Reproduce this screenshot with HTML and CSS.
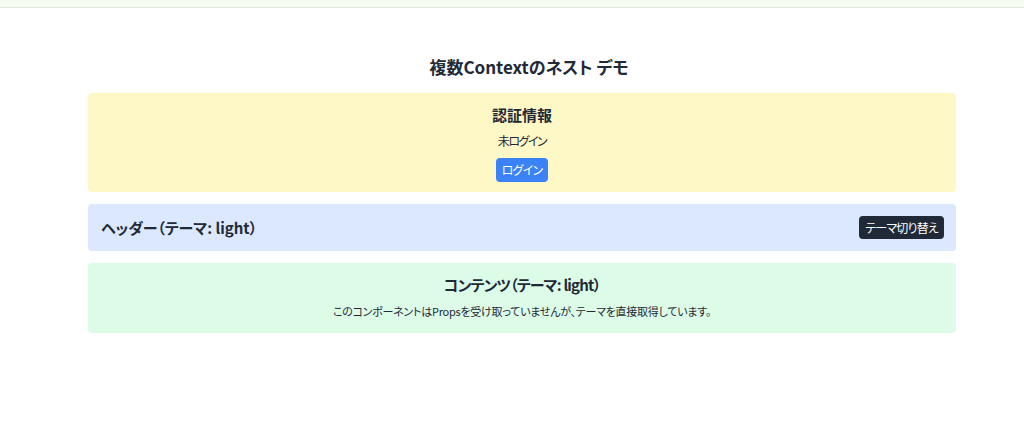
FILE: index.html
```html
<!DOCTYPE html>
<html lang="ja">
<head>
<meta charset="utf-8">
<link rel="stylesheet" href="styles.css">
</head>
<body>
<div class="topbar"></div>
<main class="container">
  <h1 class="title">複数Contextのネスト デモ</h1>
  <section class="box auth">
    <h2 class="box-title">認証情報</h2>
    <p class="status">未ログイン</p>
    <button class="btn btn-blue">ログイン</button>
  </section>
  <section class="box header">
    <h2 class="header-title">ヘッダー（テーマ: light）</h2>
    <button class="btn btn-dark">テーマ切り替え</button>
  </section>
  <section class="box content">
    <h2 class="box-title content-title">コンテンツ（テーマ: light）</h2>
    <p class="desc">このコンポーネントはPropsを受け取っていませんが、テーマを直接取得しています。</p>
  </section>
</main>
</body>
</html>
```
FILE: styles.css
```css
* { box-sizing: border-box; }
html, body { margin: 0; padding: 0; background: #ffffff; }
body {
  font-family: "Noto Sans CJK JP", "Noto Sans", sans-serif;
  font-feature-settings: "palt";
  color: #1f2937;
}
.topbar {
  height: 8px;
  background: #f6fbf0;
  border-bottom: 1px solid #e3e8dc;
}
.container {
  width: 868px;
  margin: 0 0 0 88px;
  padding-top: 47px;
}
.title {
  margin: 0 0 14px;
  padding-left: 14px;
  font-size: 17px;
  line-height: 24px;
  font-weight: 700;
  text-align: center;
  color: #1f2937;
}
.box {
  border-radius: 4px;
  margin-bottom: 12px;
}
.auth {
  background: #fef8c6;
  padding: 12px 12px 10px;
  text-align: center;
}
.box-title {
  margin: 0;
  font-size: 15px;
  line-height: 20px;
  font-weight: 700;
}
.content-title { letter-spacing: -0.8px; }
.status {
  margin: 8px 0 7px;
  font-size: 12px;
  line-height: 16px;
  letter-spacing: -1.5px;
}
.btn {
  font-family: inherit;
  font-feature-settings: "palt";
  font-size: 12px;
  line-height: 16px;
  border: 0;
  border-radius: 4px;
  color: #ffffff;
  cursor: pointer;
  letter-spacing: -0.8px;
}
.btn-blue {
  background: #3b82f6;
  padding: 4px 6px;
  height: 24px;
}
.header {
  background: #dbe8fd;
  height: 47px;
  padding: 0 12px 0 13px;
  display: flex;
  align-items: center;
  justify-content: space-between;
}
.header-title {
  margin: 0;
  font-size: 15px;
  line-height: 20px;
  font-weight: 600;
}
.btn-dark {
  background: #1f2937;
  padding: 4px 6px;
  height: 23px;
}
.content {
  background: #dcfce8;
  padding: 12px 12px 14px;
  text-align: center;
}
.desc {
  margin: 8px 0 0;
  font-size: 11px;
  line-height: 16px;
  letter-spacing: -0.25px;
}
```
